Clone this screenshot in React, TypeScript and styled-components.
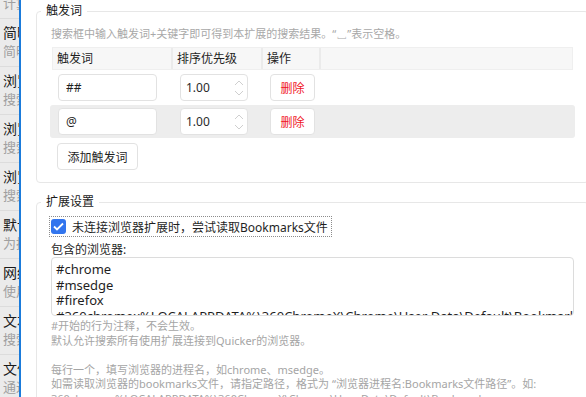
import styled, { createGlobalStyle } from "styled-components";

const GlobalStyle = createGlobalStyle`
  html, body {
    margin: 0;
    padding: 0;
    overflow: hidden;
    background: #fff;
  }
  body {
    font-family: "Noto Sans", "Noto Sans CJK SC", sans-serif;
    font-size: 12px;
    color: #1f1f1f;
  }
  input, button, textarea {
    font: inherit;
    color: inherit;
  }
`;

const sideItems = [
  { title: "计算器", sub: "计算表达式结果" },
  { title: "简明搜索", sub: "简明的搜索结果" },
  { title: "浏览器书签", sub: "搜索浏览器书签" },
  { title: "浏览器历史", sub: "搜索浏览器历史" },
  { title: "浏览器标签", sub: "搜索浏览器标签页" },
  { title: "默认搜索", sub: "为搜索提供默认结果" },
  { title: "网络搜索", sub: "使用网络搜索" },
  { title: "文本处理", sub: "搜索文本" },
  { title: "文件搜索", sub: "通过文件名搜索" },
];

const triggers = ["##", "@"];

const helpText = `#开始的行为注释，不会生效。
默认允许搜索所有使用扩展连接到Quicker的浏览器。

每行一个，填写浏览器的进程名，如chrome、msedge。
如需读取浏览器的bookmarks文件，请指定路径，格式为 “浏览器进程名:Bookmarks文件路径”。如:
360chromex%LOCALAPPDATA%\\360ChromeX\\Chrome\\User Data\\Default\\Bookmarks`;

const browsers = `#chrome
#msedge
#firefox
#360chromex%LOCALAPPDATA%\\360ChromeX\\Chrome\\User Data\\Default\\Bookmarks`;

const SpinIcon = () => (
  <svg width="10" height="18" viewBox="0 0 10 18" fill="none">
    <path d="M1 6 L5 2 L9 6" stroke="#cfcfcf" strokeWidth="1" />
    <path d="M1 12 L5 16 L9 12" stroke="#cfcfcf" strokeWidth="1" />
  </svg>
);

const CheckIcon = () => (
  <svg width="11" height="9" viewBox="0 0 11 9" fill="none">
    <path d="M1 4.5 L4 7.5 L10 1.5" stroke="#fff" strokeWidth="1.8" />
  </svg>
);

const App = () => {
  return (
    <>
      <GlobalStyle />
      <Page>
        <Sidebar>
          <SideList>
            {sideItems.map((item) => (
              <SideItem key={item.title}>
                <SideTitle>{item.title}</SideTitle>
                <SideSub>{item.sub}</SideSub>
              </SideItem>
            ))}
          </SideList>
        </Sidebar>
        <Main>
          <Group>
            <Legend>触发词</Legend>
            <Desc>搜索框中输入触发词+关键字即可得到本扩展的搜索结果。“␣”表示空格。</Desc>
            <HeaderRow>
              <HeadCell>触发词</HeadCell>
              <HeadCell>排序优先级</HeadCell>
              <HeadCell>操作</HeadCell>
              <HeadCell $last />
            </HeaderRow>
            {triggers.map((t, i) => (
              <Row key={t} $alt={i % 2 === 1}>
                <Cell>
                  <TextInput defaultValue={t} />
                </Cell>
                <Cell>
                  <NumberBox>
                    <span>1.00</span>
                    <SpinIcon />
                  </NumberBox>
                </Cell>
                <Cell>
                  <DeleteButton>删除</DeleteButton>
                </Cell>
                <Cell />
              </Row>
            ))}
            <AddButton>添加触发词</AddButton>
          </Group>

          <Group $second>
            <Legend>扩展设置</Legend>
            <CheckRow>
              <CheckBox>
                <CheckIcon />
              </CheckBox>
              未连接浏览器扩展时，尝试读取Bookmarks文件
            </CheckRow>
            <FieldLabel>包含的浏览器:</FieldLabel>
            <BrowserArea wrap="off" defaultValue={browsers} />
            <Help>{helpText}</Help>
          </Group>
        </Main>
      </Page>
    </>
  );
};

const Page = styled.div`
  display: flex;
  width: 604px;
  height: 397px;
  overflow: hidden;
`;

const Sidebar = styled.div`
  width: 19px;
  flex-shrink: 0;
  background: #ebebeb;
  border-right: 2px solid #1a7bdb;
  overflow: hidden;
`;

const SideList = styled.ul`
  margin: -29px 0 0;
  padding: 0;
  list-style: none;
`;

const SideItem = styled.li`
  height: 48px;
  box-sizing: border-box;
  padding: 5px 0 0 3px;
  border-bottom: 1px solid #dcdcdc;
  white-space: nowrap;
`;

const SideTitle = styled.div`
  font-size: 14px;
  line-height: 18px;
  color: #1a1a1a;
`;

const SideSub = styled.div`
  font-size: 13px;
  line-height: 18px;
  color: #a0a0a0;
`;

const Main = styled.div`
  flex: 1;
  min-width: 0;
  padding: 3px 15px 0;
  background: #fff;
`;

const Group = styled.fieldset<{ $second?: boolean }>`
  margin: ${({ $second }) => ($second ? "11px" : "0")} 0 0;
  padding: 0 14px 12px;
  border: 1px solid #e7e7e7;
  border-radius: 4px;
  min-width: 0;
`;

const Legend = styled.legend`
  margin-left: -10px;
  padding: 0 5px;
  font-size: 12px;
  line-height: 16px;
  color: #1a1a1a;
`;

const Desc = styled.div`
  margin-top: 7px;
  font-size: 11px;
  line-height: 16px;
  color: #a8a8a8;
  white-space: nowrap;
`;

const grid = `
  display: grid;
  grid-template-columns: 120px 90px 58px 1fr;
`;

const HeaderRow = styled.div`
  ${grid}
  margin: 5px 1px 0;
  height: 23px;
  box-sizing: border-box;
  background: #f7f7f7;
  border: 1px solid #efefef;
`;

const HeadCell = styled.div<{ $last?: boolean }>`
  padding-left: 4px;
  line-height: 21px;
  font-size: 12px;
  border-right: ${({ $last }) => ($last ? "none" : "2px solid #ebebeb")};
`;

const Row = styled.div<{ $alt: boolean }>`
  ${grid}
  grid-template-columns: 122px 90px 58px 1fr;
  height: 33px;
  margin: 1px -1px 0;
  border-radius: 3px;
  background: ${({ $alt }) => ($alt ? "#ededed" : "transparent")};
`;

const Cell = styled.div`
  display: flex;
  align-items: center;
  padding-left: 8px;
`;

const TextInput = styled.input`
  width: 99px;
  height: 27px;
  box-sizing: border-box;
  padding: 0 7px;
  border: 1px solid #e2e2e2;
  border-radius: 4px;
  background: #fff;
  font-size: 12px;
  outline: none;
`;

const NumberBox = styled.div`
  display: flex;
  align-items: center;
  justify-content: space-between;
  width: 68px;
  height: 27px;
  box-sizing: border-box;
  padding: 0 3px 0 5px;
  border: 1px solid #e2e2e2;
  border-radius: 4px;
  background: #fff;
  font-size: 12px;
  color: #2a2a2a;
`;

const BaseButton = styled.button`
  height: 27px;
  box-sizing: border-box;
  border: 1px solid #e2e2e2;
  border-radius: 4px;
  background: #fff;
  font-size: 12px;
  padding: 0 10px;
  cursor: pointer;
`;

const DeleteButton = styled(BaseButton)`
  width: 45px;
  padding: 0;
  color: #f0141e;
`;

const AddButton = styled(BaseButton)`
  margin: 5px 0 0 6px;
  width: 81px;
  padding: 0;
  color: #1f1f1f;
`;

const CheckRow = styled.label`
  display: inline-flex;
  align-items: center;
  gap: 6px;
  margin: 6px 0 0 -2px;
  height: 21px;
  box-sizing: border-box;
  padding: 0 3px 0 1px;
  border: 1px dotted #8c8c8c;
  font-size: 12px;
  white-space: nowrap;
`;

const CheckBox = styled.span`
  display: inline-flex;
  align-items: center;
  justify-content: center;
  width: 15px;
  height: 15px;
  border-radius: 3px;
  background: #3275ee;
`;

const FieldLabel = styled.div`
  margin-top: 6px;
  font-size: 12px;
  line-height: 14px;
`;

const BrowserArea = styled.textarea`
  display: block;
  width: 100%;
  height: 59px;
  box-sizing: border-box;
  padding: 4px 4px 0;
  border: 1px solid #dcdcdc;
  border-radius: 4px;
  font-size: 13px;
  line-height: 15.5px;
  resize: none;
  overflow: hidden;
  outline: none;
`;

const Help = styled.div`
  margin-top: 3px;
  font-size: 11px;
  line-height: 14.5px;
  color: #a5a5a5;
  white-space: pre;
`;

export default App;
